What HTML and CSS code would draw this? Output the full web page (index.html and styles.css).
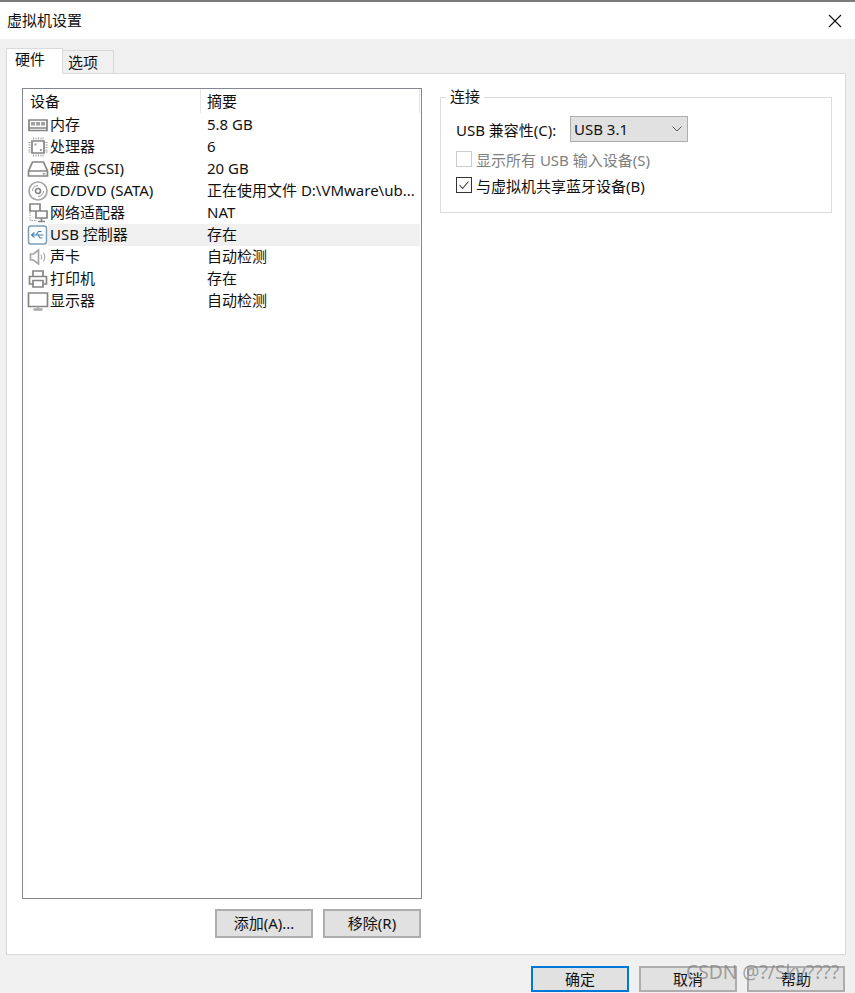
FILE: index.html
```html
<!DOCTYPE html>
<html lang="zh-CN">

<head>
    <meta charset="UTF-8" />
    <title>虚拟机设置</title>
    <link rel="stylesheet" href="styles.css">
</head>

<body>
    <div class="window">
        <header class="title-bar">
            <span class="title">虚拟机设置</span>
            <svg class="close-icon" width="14" height="14" viewBox="0 0 14 14"><path d="M1 1L13 13M13 1L1 13" /></svg>
        </header>

        <div class="content">
            <nav class="tabs">
                <div class="tab active">硬件</div>
                <div class="tab">选项</div>
            </nav>

            <section class="panel">
                <div class="left-col">
                    <div class="device-list">
                        <div class="list-head">
                            <div class="head-device">设备</div>
                            <div class="head-summary">摘要</div>
                        </div>

                        <div class="row">
                            <svg class="icon" viewBox="0 0 22 22"><path d="M2 6h18v8H2zM2 14v2.500h18V14" /><path class="fill" d="M4 8h4v3.500H4zM9 8h4v3.500H9zM14 8h4v3.500h-4z" /></svg>
                            <span class="name">内存</span><span class="summary">5.8 GB</span>
                        </div>
                        <div class="row">
                            <svg class="icon" viewBox="0 0 22 22"><path d="M5 5h12v12H5z" /><path class="thin" d="M6.500 1.500v2M9 1.500v2M11.500 1.500v2M14 1.500v2M16 1.500v2M6.500 18.500v2M9 18.500v2M11.500 18.500v2M14 18.500v2M16 18.500v2M1.500 6.500h2M1.500 9h2M1.500 11.500h2M1.500 14h2M1.500 16h2M18.500 6.500h2M18.500 9h2M18.500 11.500h2M18.500 14h2M18.500 16h2" /><path class="fill" d="M7.500 7.500h2v2h-2zM13 13h2v2h-2z" /></svg>
                            <span class="name">处理器</span><span class="summary">6</span>
                        </div>
                        <div class="row">
                            <svg class="icon" viewBox="0 0 22 22"><path d="M1.500 13L5.500 4h11l4 9v5h-19zM1.500 13h19" /><path class="fill" d="M15.500 15h3v1.500h-3z" /></svg>
                            <span class="name">硬盘 (SCSI)</span><span class="summary">20 GB</span>
                        </div>
                        <div class="row">
                            <svg class="icon" viewBox="0 0 22 22"><circle class="light" cx="11" cy="11" r="9" /><circle cx="11" cy="11" r="2.500" /><path class="thin" d="M5.500 11a5.500 5.500 0 0 1 5.500-5.500M16.500 11a5.500 5.500 0 0 1-5.500 5.500" /></svg>
                            <span class="name">CD/DVD (SATA)</span><span class="summary">正在使用文件 D:\VMware\ub...</span>
                        </div>
                        <div class="row">
                            <svg class="icon" viewBox="0 0 22 22"><path d="M3 2h10v7H3zM9 9h11v7H9zM14.500 16v3M11 19.500h7" /><path class="thin dotted" d="M3 10v8.500h7" /></svg>
                            <span class="name">网络适配器</span><span class="summary">NAT</span>
                        </div>
                        <div class="row selected">
                            <svg class="icon usb" viewBox="0 0 22 22"><rect x="1.500" y="2" width="18" height="18" rx="2.500" /><path d="M4.500 11h12M7.500 8.500L4.500 11l3 2.500M9 11l2.500-3.500h3M11 11l2 3h2.500" /></svg>
                            <span class="name">USB 控制器</span><span class="summary">存在</span>
                        </div>
                        <div class="row">
                            <svg class="icon" viewBox="0 0 22 22"><path class="light" d="M3.500 8h3l5-4v14l-5-4h-3z" /><path class="thin" d="M14 8.500q1.500 2.500 0 5M16.500 6.500q3 4.500 0 9" /></svg>
                            <span class="name">声卡</span><span class="summary">自动检测</span>
                        </div>
                        <div class="row">
                            <svg class="icon" viewBox="0 0 22 22"><path d="M6 8V3h10v5M5.500 16H2.500V8.500h17V16h-3M6 12.500h10V19H6z" /></svg>
                            <span class="name">打印机</span><span class="summary">存在</span>
                        </div>
                        <div class="row">
                            <svg class="icon" viewBox="0 0 22 22"><path d="M1.500 3h19v13.500h-19z" /><path class="heavy" d="M6.500 19.500h9" /><path class="light" d="M11 16.500v2" /></svg>
                            <span class="name">显示器</span><span class="summary">自动检测</span>
                        </div>
                    </div>

                    <div class="list-actions">
                        <button class="btn">添加(A)...</button>
                        <button class="btn">移除(R)</button>
                    </div>
                </div>

                <div class="right-col">
                    <fieldset class="group">
                        <legend>连接</legend>
                        <div class="compat-row">
                            <span class="compat-label">USB 兼容性(C):</span>
                            <div class="select">
                                <span>USB 3.1</span>
                                <svg width="10" height="6" viewBox="0 0 10 6"><path d="M0.500 0.500l4.500 4.500 4.500-4.500" /></svg>
                            </div>
                        </div>
                        <label class="check disabled"><span class="box"></span>显示所有 USB 输入设备(S)</label>
                        <label class="check">
                            <span class="box"><svg width="14" height="14" viewBox="0 0 14 14"><path d="M2.500 7l3 3.500 6-7" /></svg></span>与虚拟机共享蓝牙设备(B)
                        </label>
                    </fieldset>
                </div>
            </section>

            <footer class="dialog-actions">
                <button class="btn default">确定</button>
                <button class="btn">取消</button>
                <button class="btn">帮助</button>
            </footer>
        </div>
        <div class="watermark">CSDN @?/Sky????</div>
    </div>
</body>

</html>
```

FILE: styles.css
```css
/* Reset */

* {
    margin: 0;
    padding: 0;
    box-sizing: border-box;
}

body {
    font-family: "Noto Sans", "Noto Sans CJK SC", sans-serif;
    font-size: 15px;
    color: #111;
    background: #f0f0f0;
    overflow: hidden;
}

.window {
    position: relative;
    width: 855px;
    height: 993px;
}

/* Title bar */

.title-bar {
    height: 39px;
    background: #fff;
    border-top: 2px solid #7a7a7a;
    display: flex;
    justify-content: space-between;
    align-items: center;
    padding: 0 13px 0 7px;
}

.title {
    line-height: 34px;
    margin-bottom: 2px;
}

.close-icon path {
    stroke: #111;
    stroke-width: 1.1;
    fill: none;
}

/* Tabs */

.content {
    padding: 9px 9px 0 6px;
}

.tabs {
    display: flex;
    align-items: flex-end;
    height: 25px;
}

.tab {
    width: 51px;
    height: 23px;
    padding-left: 5px;
    line-height: 22px;
    background: #f0f0f0;
    border: 1px solid #d9d9d9;
    border-bottom: none;
    border-left: none;
}

.tab.active {
    width: 57px;
    height: 26px;
    margin-bottom: -1px;
    padding-left: 8px;
    line-height: 20px;
    background: #fff;
    border-left: 1px solid #d9d9d9;
    position: relative;
}

.panel {
    height: 882px;
    background: #fff;
    border: 1px solid #d9d9d9;
    padding: 14px 14px 15px 15px;
    display: flex;
    gap: 18px;
}

/* Device list */

.left-col {
    width: 400px;
    flex-shrink: 0;
    display: flex;
    flex-direction: column;
}

.device-list {
    height: 811px;
    border: 1px solid #828790;
}

.list-head {
    display: flex;
    height: 25px;
    line-height: 25px;
}

.head-device {
    width: 178px;
    height: 24px;
    padding-left: 7px;
    border-right: 1px solid #e5e5e5;
}

.head-summary {
    flex: 1;
    height: 24px;
    padding-left: 6px;
    border-right: 1px solid #e5e5e5;
    margin-right: 1px;
}

.row {
    display: flex;
    align-items: flex-start;
    height: 22px;
    line-height: 20px;
    white-space: nowrap;
}

.icon {
    width: 22px;
    height: 22px;
    margin-left: 4px;
    flex-shrink: 0;
}

.icon path,
.icon circle,
.icon rect {
    fill: none;
    stroke: #858585;
    stroke-width: 1.700;
}

.icon .thin {
    stroke-width: 1;
    stroke: #9a9a9a;
}

.icon .dotted {
    stroke-dasharray: 1.500 1;
}

.icon .light {
    stroke: #a6a6a6;
}

.icon .fill {
    fill: #a0a0a0;
    stroke: none;
}

.icon .heavy {
    stroke-width: 2.500;
    stroke: #a6a6a6;
}

.icon.usb rect {
    stroke: #7c9db8;
    stroke-width: 1.500;
}

.icon.usb path {
    stroke: #3f80b0;
    stroke-width: 1.100;
}

.name {
    width: 151px;
    padding-left: 1px;
    flex-shrink: 0;
}

.summary {
    flex: 1;
    padding-left: 7px;
}

.row.selected {
    background: linear-gradient(90deg, #fff 25px, #f0f0f0 25px);
    margin-right: 1px;
}

/* Buttons */

.btn {
    font: inherit;
    color: #111;
    width: 98px;
    height: 29px;
    padding-bottom: 2px;
    background: #e1e1e1;
    border: 2px solid #adadad;
}

.btn.default {
    border-color: #0078d7;
}

.list-actions {
    display: flex;
    justify-content: flex-end;
    gap: 10px;
    margin-top: 10px;
    padding-right: 1px;
}

.dialog-actions {
    display: flex;
    justify-content: flex-end;
    gap: 10px;
    margin-top: 11px;
    padding-right: 1px;
}

.dialog-actions .btn {
    height: 26px;
}

/* Connection group */

.right-col {
    flex: 1;
}

.group {
    width: 392px;
    height: 127px;
    margin-top: -2px;
    border: 1px solid #dcdcdc;
    padding: 8px 15px 0;
}

.group legend {
    margin-left: -10px;
    padding: 0 4px 2px;
    line-height: 20px;
}

.compat-row {
    display: flex;
    align-items: center;
    height: 26px;
}

.compat-label {
    width: 114px;
    flex-shrink: 0;
}

.select {
    width: 118px;
    height: 26px;
    background: #e1e1e1;
    border: 1px solid #adadad;
    display: flex;
    justify-content: space-between;
    align-items: center;
    padding: 0 5px 0 3px;
}

.select path {
    fill: none;
    stroke: #555;
    stroke-width: 1;
}

.check {
    display: flex;
    align-items: center;
    gap: 4px;
    height: 26px;
}

.compat-row + .check {
    margin-top: 4px;
}

.box {
    width: 16px;
    height: 16px;
    border: 1px solid #333;
    background: #fff;
    display: flex;
    align-items: center;
    justify-content: center;
}

.box path {
    fill: none;
    stroke: #333;
    stroke-width: 1.100;
}

.check.disabled {
    color: #808080;
}

.check.disabled .box {
    border-color: #ccc;
}

.watermark {
    position: absolute;
    left: 686px;
    top: 960px;
    font-size: 19.2px;
    line-height: 24px;
    color: rgba(125, 125, 125, 0.7);
    white-space: nowrap;
}
```
